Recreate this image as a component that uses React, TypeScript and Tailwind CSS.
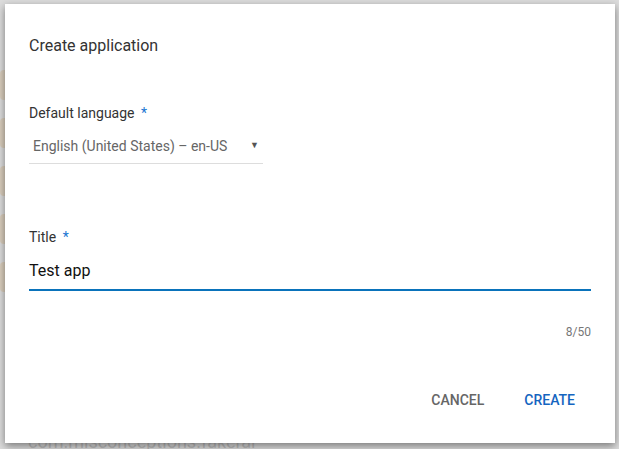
export default function App() {
  return (
    <div className="relative h-[449px] w-[619px] overflow-hidden bg-[#dcdcdc] font-['Roboto',sans-serif]">
      {/* page behind the dialog, dimmed */}
      <div className="flex flex-col gap-[18px] pt-[70px] opacity-60">
        <div className="h-[30px] w-[40px] rounded bg-[#d8c4a8]" />
        <div className="h-[30px] w-[40px] rounded bg-[#d8c4a8]" />
        <div className="h-[30px] w-[40px] rounded bg-[#d8c4a8]" />
        <div className="h-[30px] w-[40px] rounded bg-[#d8c4a8]" />
        <div className="h-[30px] w-[40px] rounded bg-[#d8c4a8]" />
      </div>
      <div className="absolute left-[28px] top-[428px] text-[18px] text-[#bdbdbd]">com.misconceptions.fakeral</div>

      <div className="absolute left-[5px] top-[4px] flex h-[439px] w-[610px] flex-col bg-white px-[24px] shadow-[0_3px_8px_rgba(0,0,0,0.45)]">
        <h1 className="mt-[32px] text-[16px] leading-[20px] text-[#333]">Create application</h1>

        <div className="mt-[48px] text-[14px] leading-[18px] text-[#333]">
          Default language <span className="ml-[3px] text-[#1976d2]">*</span>
        </div>
        <div className="mt-[15px] flex w-[234px] items-center justify-between border-b border-[#dddddd] pb-[8px] pl-[4px] pr-[4px]">
          <span className="text-[14px] leading-[18px] text-[#666]">English (United States) – en-US</span>
          <span className="text-[9px] text-[#555]">▼</span>
        </div>

        <div className="mt-[64px] text-[14px] leading-[18px] text-[#333]">
          Title <span className="ml-[3px] text-[#1976d2]">*</span>
        </div>
        <div className="mt-[15px] border-b-2 border-[#0a73bb] pb-[8px] text-[16px] leading-[20px] text-[#111]">Test app</div>
        <div className="mt-[34px] text-right text-[12px] leading-[14px] text-[#777]">8/50</div>

        <div className="mt-[51px] flex justify-end gap-[40px] pr-[16px]">
          <button className="text-[14px] font-medium text-[#666]">CANCEL</button>
          <button className="text-[14px] font-medium text-[#1565c0]">CREATE</button>
        </div>
      </div>
    </div>
  );
}
